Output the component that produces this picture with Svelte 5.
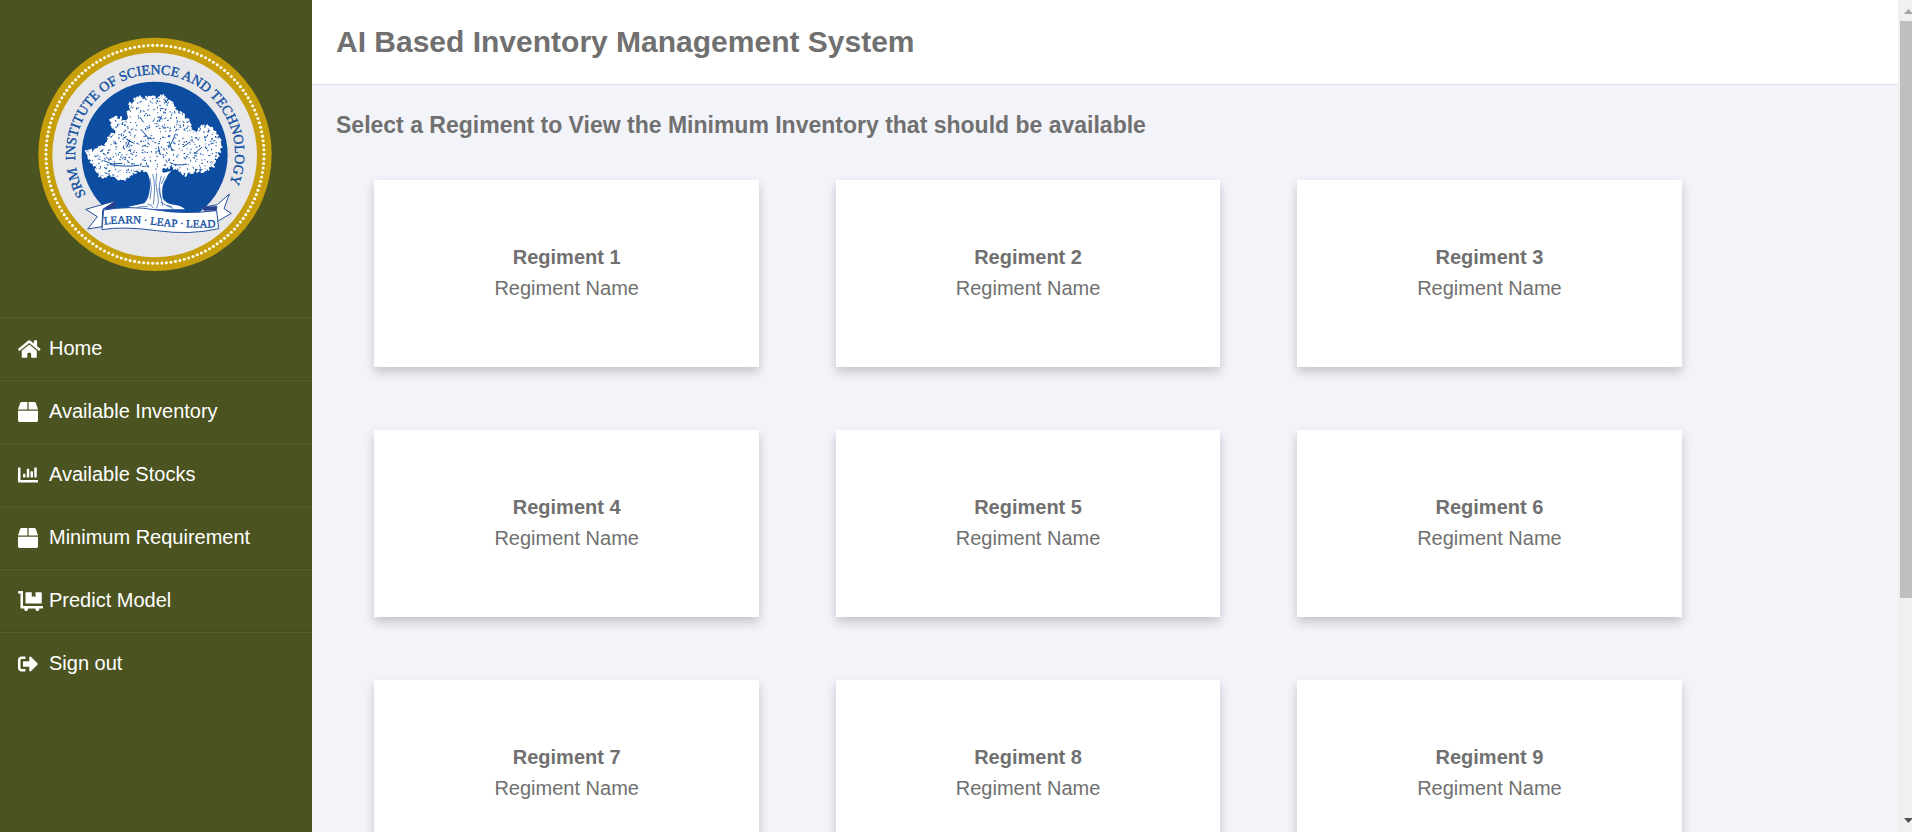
<script>
  const regiments = Array.from({ length: 9 }, (_, i) => ({
    id: i + 1,
    name: 'Regiment Name'
  }));

  const NAV = [
    {
      label: 'Home',
      width: 576,
      d: 'M280.37 148.26L96 300.11V464a16 16 0 0 0 16 16l112.06-.29a16 16 0 0 0 15.92-16V368a16 16 0 0 1 16-16h64a16 16 0 0 1 16 16v95.64a16 16 0 0 0 16 16.05L464 480a16 16 0 0 0 16-16V300L295.67 148.26a12.19 12.19 0 0 0-15.3 0zM571.6 251.47L488 182.56V44.05a12 12 0 0 0-12-12h-56a12 12 0 0 0-12 12v72.61L318.47 43a48 48 0 0 0-61 0L4.34 251.47a12 12 0 0 0-1.6 16.9l25.5 31A12 12 0 0 0 45.15 301l235.22-193.74a12.19 12.19 0 0 1 15.3 0L530.9 301a12 12 0 0 0 16.9-1.6l25.5-31a12 12 0 0 0-1.7-16.93z'
    },
    {
      label: 'Available Inventory',
      width: 512,
      d: 'M509.5 184.6L458.9 32.8C452.4 13.2 434.1 0 413.4 0H272v192h238.7c-.4-2.5-.4-5-1.2-7.4zM240 0H98.6c-20.7 0-39 13.2-45.5 32.8L2.5 184.6c-.8 2.4-.8 4.9-1.2 7.4H240V0zM0 224v240c0 26.5 21.5 48 48 48h416c26.5 0 48-21.5 48-48V224H0z'
    },
    {
      label: 'Available Stocks',
      width: 512,
      d: 'M332.8 320h38.4c6.4 0 12.8-6.4 12.8-12.8V172.8c0-6.4-6.4-12.8-12.8-12.8h-38.4c-6.4 0-12.8 6.4-12.8 12.8v134.4c0 6.4 6.4 12.8 12.8 12.8zm96 0h38.4c6.4 0 12.8-6.4 12.8-12.8V76.8c0-6.4-6.4-12.8-12.8-12.8h-38.4c-6.4 0-12.8 6.4-12.8 12.8v230.4c0 6.4 6.4 12.8 12.8 12.8zm-288 0h38.4c6.4 0 12.8-6.4 12.8-12.8v-70.4c0-6.4-6.4-12.8-12.8-12.8h-38.4c-6.4 0-12.8 6.4-12.8 12.8v70.4c0 6.4 6.4 12.8 12.8 12.8zm96 0h38.4c6.4 0 12.8-6.4 12.8-12.8V108.8c0-6.4-6.4-12.8-12.8-12.8h-38.4c-6.4 0-12.8 6.4-12.8 12.8v198.4c0 6.4 6.4 12.8 12.8 12.8zM496 384H64V80c0-8.84-7.16-16-16-16H16C7.16 64 0 71.16 0 80v336c0 17.67 14.33 32 32 32h464c8.84 0 16-7.16 16-16v-32c0-8.84-7.16-16-16-16z'
    },
    {
      label: 'Minimum Requirement',
      width: 512,
      d: 'M509.5 184.6L458.9 32.8C452.4 13.2 434.1 0 413.4 0H272v192h238.7c-.4-2.5-.4-5-1.2-7.4zM240 0H98.6c-20.7 0-39 13.2-45.5 32.8L2.5 184.6c-.8 2.4-.8 4.9-1.2 7.4H240V0zM0 224v240c0 26.5 21.5 48 48 48h416c26.5 0 48-21.5 48-48V224H0z'
    },
    {
      label: 'Predict Model',
      width: 640,
      d: 'M208 320h384c8.8 0 16-7.2 16-16V48c0-8.8-7.2-16-16-16H448v128l-48-32-48 32V32H208c-8.8 0-16 7.2-16 16v256c0 8.8 7.2 16 16 16zm416 64H128V16c0-8.8-7.2-16-16-16H16C7.2 0 0 7.2 0 16v32c0 8.8 7.2 16 16 16h48v368c0 8.8 7.2 16 16 16h82.9c-1.8 5-2.9 10.4-2.9 16 0 26.5 21.5 48 48 48s48-21.5 48-48c0-5.6-1.2-11-2.9-16H451c-1.8 5-2.9 10.4-2.9 16 0 26.5 21.5 48 48 48s48-21.5 48-48c0-5.6-1.2-11-2.9-16H624c8.8 0 16-7.2 16-16v-32c0-8.8-7.2-16-16-16z'
    },
    {
      label: 'Sign out',
      width: 512,
      d: 'M497 273L329 441c-15 15-41 4.5-41-17v-96H152c-13.3 0-24-10.7-24-24v-96c0-13.3 10.7-24 24-24h136V88c0-21.4 25.9-32 41-17l168 168c9.3 9.4 9.3 24.6 0 34zM192 436v-40c0-6.6-5.4-12-12-12H96c-17.7 0-32-14.3-32-32V160c0-17.7 14.3-32 32-32h84c6.6 0 12-5.4 12-12V76c0-6.6-5.4-12-12-12H96c-53 0-96 43-96 96v192c0 53 43 96 96 96h84c6.6 0 12-5.4 12-12z'
    }
  ];

  // --- CREST ---
  const CANOPY = [
    [176, 366], [200, 364], [215, 349], [235, 348], [236, 326], [254, 318], [267, 300],
    [248, 290], [246, 270], [264, 267], [290, 272], [302, 248], [308, 217], [327, 205],
    [350, 210], [375, 207], [395, 204], [418, 214], [431, 228], [432, 246], [455, 254],
    [466, 267], [474, 287], [478, 302], [498, 314], [510, 312], [512, 296], [530, 292],
    [548, 302], [558, 318], [570, 338], [564, 358], [558, 380], [543, 404], [520, 418],
    [495, 416], [472, 430], [446, 422], [425, 402], [402, 414], [385, 422], [352, 420],
    [326, 416], [300, 434], [274, 446], [244, 436], [214, 436], [202, 420], [210, 405],
    [190, 398], [184, 384]
  ];

  // fixed seed so the foliage is the same on every load
  let seed = 11;
  function rand() {
    seed = (seed * 16807) % 2147483647;
    return seed / 2147483647;
  }

  function inside(x, y) {
    let hit = false;
    for (let i = 0, j = CANOPY.length - 1; i < CANOPY.length; j = i++) {
      const [xi, yi] = CANOPY[i];
      const [xj, yj] = CANOPY[j];
      if (yi > y !== yj > y && x < ((xj - xi) * (y - yi)) / (yj - yi) + xi) hit = !hit;
    }
    return hit;
  }

  const leaves = CANOPY.flatMap(([x, y], i) => {
    const [nx, ny] = CANOPY[(i + 1) % CANOPY.length];
    return Array.from({ length: 8 }, (_, k) => ({
      x: x + ((nx - x) * k) / 8 + (rand() - 0.5) * 14,
      y: y + ((ny - y) * k) / 8 + (rand() - 0.5) * 14,
      r: rand() * 180
    }));
  });

  const gaps = [];
  while (gaps.length < 430) {
    const x = 170 + rand() * 400;
    const y = 205 + rand() * 235;
    if (inside(x, y)) gaps.push({ x, y, rx: 1.6 + rand() * 2.4, r: rand() * 180 });
  }

  const DOTS = 150;
  const dots = Array.from({ length: DOTS }, (_, i) => {
    const a = (i / DOTS) * 2 * Math.PI;
    return { x: 375 + 327 * Math.cos(a), y: 373 + 327 * Math.sin(a) };
  });
</script>

<div class="layout">
  <aside class="sidebar">
    <div class="brand">
      <svg class="crest" viewBox="0 0 750 750" role="img" aria-label="SRM Institute of Science and Technology">
        <defs>
          <path id="name-arc" d="M181 514A240 240 0 1 1 589 482" />
          <path id="ribbon-line" d="M219 584Q300 575 375 585T560 592" />
        </defs>
        <circle cx="375" cy="373" r="350" fill="#c79f0b" />
        {#each dots as dot}
          <circle cx={dot.x} cy={dot.y} r="4.6" fill="#fffdf0" />
        {/each}
        <circle cx="374" cy="375" r="307" fill="#e7e7e9" />
        <circle cx="374" cy="374" r="219" fill="#0d4da1" />
        <text class="crest-name">
          <textPath href="#name-arc" startOffset="50%">SRM&#160; INSTITUTE OF SCIENCE AND TECHNOLOGY</textPath>
        </text>

        <polygon points={CANOPY.map((p) => p.join(',')).join(' ')} fill="#fff" />
        {#each leaves as leaf}
          <ellipse cx={leaf.x} cy={leaf.y} rx="6" ry="3" fill="#fff" transform="rotate({leaf.r} {leaf.x} {leaf.y})" />
        {/each}
        {#each gaps as gap}
          <ellipse cx={gap.x} cy={gap.y} rx={gap.rx} ry="1.5" fill="#0d4da1" transform="rotate({gap.r} {gap.x} {gap.y})" />
        {/each}
        <g fill="none" stroke="#0d4da1" stroke-linecap="round" stroke-width="3">
          <path d="M333 298l22 26M355 324l10 3M436 312l-9 22-11 20M418 336l8 26M385 350l6 24M290 328l22 12M240 404q50 8 86 2M470 402q-30 8-50-4M300 330l-10 22M480 336l-20 14" />
          <path d="M222 392l24 10 30-2M516 352l-22 18M330 262l10 14M395 258l-8 16" />
        </g>
        <path
          d="M346 418q16 22 14 54q-2 34-17 48q-22 6-48 10l20 8h150q-10-12-35-14q-26-4-32-20q-6-38 10-58q4-12 16-24l-22 6-18-8z"
          fill="#fff"
        />
        <path
          d="M368 432q10 34 2 92M380 430q-6 30 2 60t-4 46M394 438q-10 24-4 50t8 40M360 444q8 34 0 64M404 440l-10 22M386 474l6 30M352 522q14 2 18 12M392 516q14 12 34 14M320 532q20-4 34-2M410 526l20 10"
          fill="none"
          stroke="#0d4da1"
          stroke-width="2"
        />

        <g stroke="#2450a0" stroke-width="3" stroke-linejoin="round">
          <path d="M258 512L167 538L202 560L173 597L216 590L218 540Z" fill="#fff" />
          <path d="M513 533L562 524L598 492L582 536L604 550L566 572Z" fill="#fff" />
          <path d="M221 540Q300 526 380 540T560 542L566 596Q480 616 380 602T216 599Z" fill="#fff" />
          <path d="M258 512L216 538L254 532Z" fill="#27408b" stroke="none" />
          <path d="M513 531L562 528L560 542L524 542Z" fill="#27408b" stroke="none" />
        </g>
        <text class="crest-motto">
          <textPath href="#ribbon-line" startOffset="50%">LEARN · LEAP · LEAD</textPath>
        </text>
      </svg>
    </div>

    <nav>
      {#each NAV as item}
        <a href="#{item.label.toLowerCase().replace(' ', '-')}">
          <svg viewBox="0 0 {item.width} 512" aria-hidden="true"><path d={item.d} /></svg>
          <span>{item.label}</span>
        </a>
      {/each}
    </nav>
  </aside>

  <main>
    <header>
      <h1>AI Based Inventory Management System</h1>
    </header>
    <section>
      <h2>Select a Regiment to View the Minimum Inventory that should be available</h2>
      <div class="cards">
        {#each regiments as regiment (regiment.id)}
          <article class="card">
            <h3>Regiment {regiment.id}</h3>
            <p>{regiment.name}</p>
          </article>
        {/each}
      </div>
    </section>
  </main>

  <div class="scrollbar" aria-hidden="true">
    <svg class="arrow up" viewBox="0 0 17 21"><path d="M6 14L10.500 9L15 14Z" /></svg>
    <div class="track"><div class="thumb"></div></div>
    <svg class="arrow down" viewBox="0 0 17 21"><path d="M6 7L10.500 12L15 7Z" /></svg>
  </div>
</div>

<style>
  :global(body) { margin: 0; }

  .layout { display: flex; height: 100vh; overflow: hidden; font-family: Arial, 'Liberation Sans', sans-serif; font-size: 20px; color: #707070; background: #f3f4f9; }

  .sidebar { flex: 0 0 312px; background: #4b5320; }
  .brand { padding: 30px 30px 37px; }
  .crest { display: block; width: 250px; height: 250px; }
  .crest-name { font-family: 'Liberation Serif', serif; font-size: 42px; fill: #0d4da1; stroke: #0d4da1; stroke-width: 1; text-anchor: middle; }
  .crest-motto { font-family: 'Liberation Serif', serif; font-size: 33px; fill: #0d4da1; stroke: #0d4da1; stroke-width: 1; text-anchor: middle; }

  nav a { display: grid; grid-template-columns: 31px 1fr; align-items: center; box-sizing: border-box; height: 63px; padding-left: 18px; border-top: 1px solid rgba(255, 255, 255, 0.06); border-bottom: 1px solid rgba(0, 0, 0, 0.06); color: #fff; text-decoration: none; }
  nav svg { height: 20px; fill: #fff; }

  main { flex: 1; min-width: 0; overflow-y: auto; scrollbar-width: none; }
  header { padding: 24px; background: #fff; border-bottom: 1px solid #dee2e6; }
  h1 { margin: 0; font-size: 30px; line-height: 36px; }
  section { padding: 24px; }
  h2 { margin: 0; font-size: 23px; line-height: 32px; }

  .cards { display: flex; flex-wrap: wrap; row-gap: 63px; padding: 39px 0; }
  .card { flex: 0 0 25%; margin: 0 2.5%; padding: 62px 0 63px; background: #fff; box-shadow: 0 5px 10px rgba(0, 0, 0, 0.2); text-align: center; }
  .card h3, .card p { margin: 0; font-size: 20px; line-height: 31px; }

  .scrollbar { flex: 0 0 14px; display: flex; flex-direction: column; overflow: hidden; background: #f0f0f0; }
  .arrow { width: 17px; height: 21px; }
  .up { fill: #a3a3a3; }
  .down { fill: #505050; }
  .track { flex: 1; padding-left: 2px; }
  .thumb { height: 73%; background: #bfbfbf; }
</style>
